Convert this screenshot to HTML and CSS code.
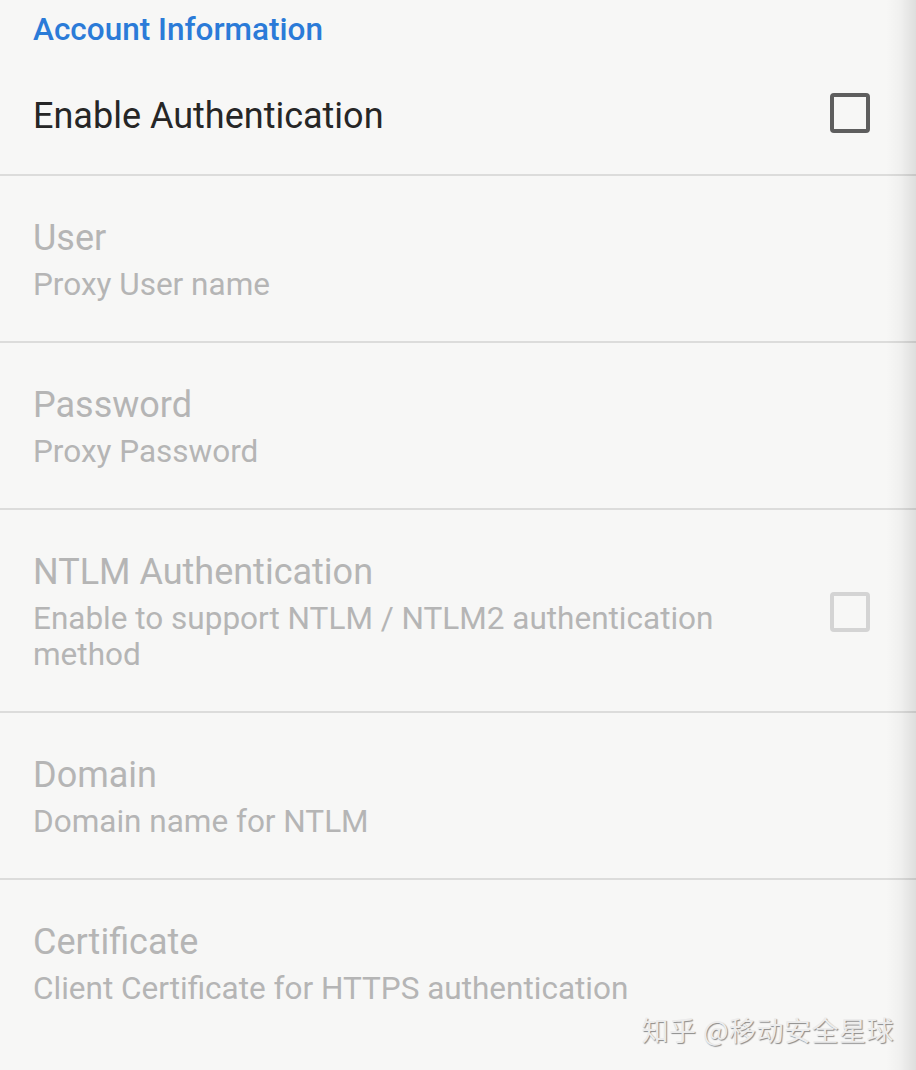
FILE: index.html
```html
<!DOCTYPE html>
<html lang="en">
<head>
<meta charset="utf-8">
<title>Account Information</title>
<link rel="stylesheet" href="styles.css">
</head>
<body>
<div class="screen">
  <div class="category">Account Information</div>

  <div class="pref pref-single">
    <div class="pref-text">
      <div class="pref-title">Enable Authentication</div>
    </div>
    <span class="checkbox"></span>
  </div>

  <div class="pref disabled">
    <div class="pref-text">
      <div class="pref-title">User</div>
      <div class="pref-summary">Proxy User name</div>
    </div>
  </div>

  <div class="pref disabled">
    <div class="pref-text">
      <div class="pref-title">Password</div>
      <div class="pref-summary">Proxy Password</div>
    </div>
  </div>

  <div class="pref disabled">
    <div class="pref-text">
      <div class="pref-title">NTLM Authentication</div>
      <div class="pref-summary">Enable to support NTLM / NTLM2 authentication method</div>
    </div>
    <span class="checkbox"></span>
  </div>

  <div class="pref disabled">
    <div class="pref-text">
      <div class="pref-title">Domain</div>
      <div class="pref-summary">Domain name for NTLM</div>
    </div>
  </div>

  <div class="pref disabled last">
    <div class="pref-text">
      <div class="pref-title">Certificate</div>
      <div class="pref-summary">Client Certificate for HTTPS authentication</div>
    </div>
  </div>

  <div class="edge-shadow"></div>
  <div class="watermark">知乎 @移动安全星球</div>
</div>
</body>
</html>
```

FILE: styles.css
```css
html, body {
  margin: 0;
  padding: 0;
  background: #f7f7f6;
}

.screen {
  position: relative;
  width: 916px;
  height: 1070px;
  overflow: hidden;
  background: #f7f7f6;
  font-family: Roboto, "Noto Sans", "Liberation Sans", sans-serif;
}

.category {
  padding: 11px 33px 7px;
  font-size: 31.5px;
  line-height: 38px;
  font-weight: 500;
  color: #2b7bd8;
}

.pref {
  display: flex;
  align-items: center;
  padding: 40px 46px 38px 33px;
  border-bottom: 2px solid #dcdcdb;
}

.pref-single {
  padding-top: 37px;
  padding-bottom: 36px;
}

.pref.last {
  border-bottom: none;
}

.pref-text {
  flex: 1;
  max-width: 760px;
  margin-right: auto;
}

.pref-title {
  font-size: 36px;
  line-height: 44px;
  color: #262626;
}

.pref-summary {
  margin-top: 7px;
  font-size: 31.5px;
  line-height: 36px;
  color: #757575;
}

.disabled .pref-title,
.disabled .pref-summary {
  color: #b5b5b5;
}

.checkbox {
  flex: none;
  width: 32px;
  height: 32px;
  border: 4px solid #5e5e5e;
  border-radius: 4px;
  margin-left: 24px;
  margin-bottom: 5px;
}

.disabled .checkbox {
  border-color: #d4d4d4;
  margin-bottom: 0;
}

.edge-shadow {
  position: absolute;
  top: 0;
  right: 0;
  width: 30px;
  height: 100%;
  background: linear-gradient(to right, rgba(0,0,0,0), rgba(0,0,0,0.03) 50%, rgba(0,0,0,0.1));
  pointer-events: none;
}

.watermark {
  position: absolute;
  right: 22px;
  bottom: 24px;
  font-family: "Noto Sans CJK SC", "Noto Sans", sans-serif;
  font-size: 27px;
  line-height: 32px;
  color: #ececec;
  text-shadow: 1px 1px 1px #8a8a8a;
  letter-spacing: 0.5px;
}
```
